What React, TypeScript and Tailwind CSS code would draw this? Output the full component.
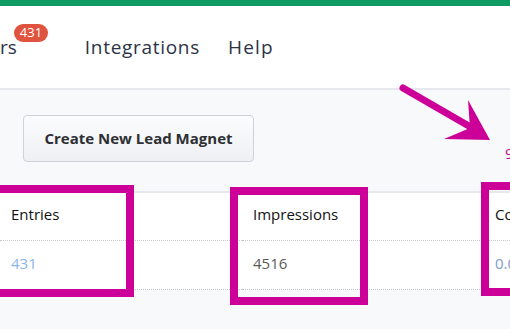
import React from "react";

const Badge = ({ count }: { count: number }) => (
  <span className="absolute left-[14px] top-[-9px] flex h-[18px] w-[34px] items-center justify-center rounded-full bg-[#e0533f] text-[13px] leading-none text-white">
    {count}
  </span>
);

const App = () => {
  return (
    <div className="relative h-[329px] w-[510px] overflow-hidden bg-[#f8f9fb] font-['Open_Sans',sans-serif]">
      <div className="h-[6px] bg-[#0e9a63]" />

      <header className="flex h-[84px] items-center border-b-2 border-[#e6e8ee] bg-white text-[19px] text-[#2c3345]">
        <div className="relative">
          <span>rs</span>
          <Badge count={431} />
        </div>
        <a className="ml-[68px] tracking-[0.7px]">Integrations</a>
        <a className="ml-[28px] tracking-[1.2px]">Help</a>
      </header>

      <div className="flex items-start justify-between pl-[23px] pt-[25px] pb-[26px]">
        <button className="h-[47px] w-[231px] rounded-[4px] border border-[#cfd3d8] bg-gradient-to-b from-[#fbfcfd] to-[#eef0f3] text-[15px] font-bold text-[#2d2f33]">
          Create New Lead Magnet
        </button>
        <a className="mt-[27px] w-[5px] overflow-hidden whitespace-nowrap text-[15px] text-[#c4108f]">
          9
        </a>
      </div>

      <div className="grid grid-cols-[242px_242px_242px] border-t-2 border-[#e6e8ee] bg-white text-[15px]">
        <div className="flex h-[48px] items-center border-b border-dotted border-[#c8c8c8] pb-[3px] pl-[11px] text-[#111]">Entries</div>
        <div className="flex h-[48px] items-center border-b border-dotted border-[#c8c8c8] pb-[3px] pl-[11px] text-[#111]">Impressions</div>
        <div className="flex h-[48px] items-center border-b border-dotted border-[#c8c8c8] pb-[3px] pl-[11px] text-[#111]">Co</div>
        <div className="flex h-[49px] items-center border-b border-dotted border-[#c8c8c8] pb-[3px] pl-[11px] text-[#8ab6f0]">431</div>
        <div className="flex h-[49px] items-center border-b border-dotted border-[#c8c8c8] pb-[3px] pl-[11px] text-[#5a5a5a]">4516</div>
        <div className="flex h-[49px] items-center border-b border-dotted border-[#c8c8c8] pb-[3px] pl-[11px] text-[#7d9cc8]">0.0</div>
      </div>

      {/* annotation boxes */}
      <div className="pointer-events-none absolute left-[-10px] top-[185px] h-[112px] w-[144px] border-[8px] border-[#cc0099]" />
      <div className="pointer-events-none absolute left-[230px] top-[187px] h-[118px] w-[138px] border-[8px] border-[#cc0099]" />
      <div className="pointer-events-none absolute left-[481px] top-[182px] h-[114px] w-[60px] border-[8px] border-[#cc0099]" />

      <svg className="pointer-events-none absolute left-0 top-0" width="510" height="329" viewBox="0 0 510 329">
        <line x1="403" y1="88" x2="474" y2="129" stroke="#cc0099" strokeWidth="7" strokeLinecap="round" />
        <polygon points="468,100 490,140 444,139 470,128" fill="#cc0099" />
      </svg>
    </div>
  );
};

export default App;
